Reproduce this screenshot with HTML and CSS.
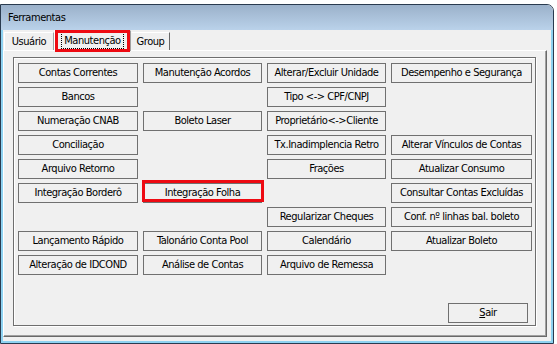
FILE: index.html
```html
<!DOCTYPE html>
<html lang="pt">
<head>
<meta charset="utf-8">
<title>Ferramentas</title>
<link rel="stylesheet" href="styles.css">
</head>
<body>
<div class="window">
  <div class="titlebar">Ferramentas</div>
  <div class="client">
    <div class="tabs">
      <div class="tab tab-usuario">Usuário</div>
      <div class="tab tab-active"><span class="focus">Manutenção</span><span class="mark"></span></div>
      <div class="tab tab-group">Group</div>
    </div>
    <div class="panel">
      <div class="group">
        <div class="grid">
          <div class="btn">Contas Correntes</div>
          <div class="btn">Manutenção Acordos</div>
          <div class="btn">Alterar/Excluir Unidade</div>
          <div class="btn">Desempenho e Segurança</div>

          <div class="btn">Bancos</div>
          <div class="cell"></div>
          <div class="btn">Tipo &lt;-&gt; CPF/CNPJ</div>
          <div class="cell"></div>

          <div class="btn">Numeração CNAB</div>
          <div class="btn">Boleto Laser</div>
          <div class="btn">Proprietário&lt;-&gt;Cliente</div>
          <div class="cell"></div>

          <div class="btn">Conciliação</div>
          <div class="cell"></div>
          <div class="btn">Tx.Inadimplencia Retro</div>
          <div class="btn">Alterar Vínculos de Contas</div>

          <div class="btn">Arquivo Retorno</div>
          <div class="cell"></div>
          <div class="btn">Frações</div>
          <div class="btn">Atualizar Consumo</div>

          <div class="btn">Integração Borderô</div>
          <div class="btn btn-marked">Integração Folha<span class="mark mark-btn"></span></div>
          <div class="cell"></div>
          <div class="btn">Consultar Contas Excluídas</div>

          <div class="cell"></div>
          <div class="cell"></div>
          <div class="btn">Regularizar Cheques</div>
          <div class="btn">Conf. nº linhas bal. boleto</div>

          <div class="btn">Lançamento Rápido</div>
          <div class="btn">Talonário Conta Pool</div>
          <div class="btn">Calendário</div>
          <div class="btn">Atualizar Boleto</div>

          <div class="btn">Alteração de IDCOND</div>
          <div class="btn">Análise de Contas</div>
          <div class="btn">Arquivo de Remessa</div>
          <div class="cell"></div>
        </div>
        <div class="btn btn-sair"><u>S</u>air</div>
      </div>
    </div>
  </div>
</div>
</body>
</html>
```

FILE: styles.css
```css
* {
  box-sizing: border-box;
}

body {
  margin: 0;
  background: #ffffff;
  font-family: "DejaVu Sans Condensed", "Liberation Sans", sans-serif;
  font-size: 11px;
  letter-spacing: -0.45px;
  color: #000000;
}

.window {
  width: 554px;
  height: 340px;
  margin-top: 4px;
  border: 1px solid #2a3b4f;
  border-top-right-radius: 7px;
  display: flex;
  flex-direction: column;
  overflow: hidden;
  background: #f0f0f0;
}

.titlebar {
  height: 25px;
  flex: none;
  background: linear-gradient(#9bb1ca, #bad2ea);
  padding-left: 7px;
  padding-top: 1px;
  line-height: 24px;
}

.client {
  flex: 1;
  display: flex;
  flex-direction: column;
  border: 2px solid #8ed2f1;
  border-top: 0;
  padding: 0 4px 4px 0;
}

.tabs {
  height: 20px;
  flex: none;
  display: flex;
  align-items: flex-end;
  padding-left: 1px;
}

.tab {
  height: 18px;
  border: 1px solid;
  border-color: #ffffff #a0a0a0 transparent #ffffff;
  border-bottom: 0;
  text-align: center;
  line-height: 17px;
}

.tab-usuario {
  width: 50px;
}

.tab-active {
  position: relative;
  width: 77px;
  height: 21px;
  margin-bottom: -1px;
  background: #f0f0f0;
  z-index: 1;
  padding-top: 1px;
  line-height: 17px;
}

.tab-group {
  width: 39px;
  border-left-color: transparent;
  border-right-color: #696969;
}

.focus {
  outline: 1px dotted #000000;
  outline-offset: 1px;
  padding: 0 1px;
}

.mark {
  position: absolute;
  border: 3px solid #ee0a12;
  top: -1px;
  left: 0;
  right: 0;
  bottom: -1px;
}

.panel {
  flex: 1;
  border: 1px solid;
  border-color: #ffffff #696969 #696969 #ffffff;
  box-shadow: inset -1px -1px 0 #a0a0a0;
  padding: 6px 0 0 9px;
}

.group {
  width: 523px;
  height: 269px;
  border: 1px solid #6e6e6e;
  box-shadow: 1px 1px 0 #ffffff, inset 1px 1px 0 #ffffff;
  padding: 5px 0 0 4px;
}

.grid {
  display: grid;
  grid-template-columns: 120px 119px 119px 141px;
  grid-auto-rows: 20px;
  column-gap: 5px;
  row-gap: 4px;
}

.btn {
  position: relative;
  height: 20px;
  border: 1px solid #707070;
  background: #f0f0f0;
  text-align: center;
  line-height: 18px;
  white-space: nowrap;
}

.mark-btn {
  top: -4px;
  left: -2px;
  right: auto;
  bottom: auto;
  width: 122px;
  height: 22px;
}

.btn-sair {
  width: 80px;
  margin-left: 430px;
  margin-top: 28px;
}
```
